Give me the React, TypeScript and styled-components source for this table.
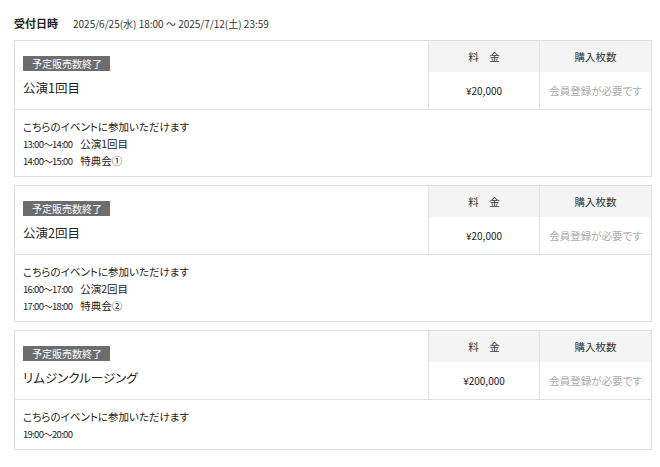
import styled, { createGlobalStyle } from 'styled-components';

type Slot = {
  time: string;
  label?: string;
};

type Ticket = {
  title: string;
  price: string;
  slots: Slot[];
};

const tickets: Ticket[] = [
  {
    title: '公演1回目',
    price: '¥20,000',
    slots: [
      { time: '13:00〜14:00', label: '公演1回目' },
      { time: '14:00〜15:00', label: '特典会①' },
    ],
  },
  {
    title: '公演2回目',
    price: '¥20,000',
    slots: [
      { time: '16:00〜17:00', label: '公演2回目' },
      { time: '17:00〜18:00', label: '特典会②' },
    ],
  },
  {
    title: 'リムジンクルージング',
    price: '¥200,000',
    slots: [{ time: '19:00〜20:00' }],
  },
];

export default function App() {
  return (
    <>
      <GlobalStyle />
      <Page>
        <Period>
          <PeriodLabel>受付日時</PeriodLabel>
          <PeriodValue>2025/6/25(水) 18:00 〜 2025/7/12(土) 23:59</PeriodValue>
        </Period>

        {tickets.map((t) => (
          <Card key={t.title}>
            <Top>
              <Info>
                <Badge>予定販売数終了</Badge>
                <Title>{t.title}</Title>
              </Info>
              <Column>
                <HeadCell>料　金</HeadCell>
                <Price>{t.price}</Price>
              </Column>
              <Column>
                <HeadCell>購入枚数</HeadCell>
                <Notice>会員登録が必要です</Notice>
              </Column>
            </Top>
            <Details>
              <Line>こちらのイベントに参加いただけます</Line>
              {t.slots.map((s) => (
                <Line key={s.time}>
                  <Time>{s.time}</Time>
                  {s.label && <SlotLabel>{s.label}</SlotLabel>}
                </Line>
              ))}
            </Details>
          </Card>
        ))}
      </Page>
    </>
  );
}

const GlobalStyle = createGlobalStyle`
  body {
    margin: 0;
    background: #ffffff;
    color: #222;
    font-family: "Noto Sans CJK JP", "Noto Sans", sans-serif;
    font-feature-settings: "palt";
  }
`;

const Page = styled.div`
  width: 638px;
  padding: 14px 0 0 14px;
  display: flex;
  flex-direction: column;
  gap: 8px;
`;

const Period = styled.div`
  display: flex;
  align-items: center;
  gap: 15px;
  height: 18px;
`;

const PeriodLabel = styled.span`
  font-weight: 700;
  font-size: 11px;
`;

const PeriodValue = styled.span`
  font-size: 10px;
  color: #333;
`;

const Card = styled.div`
  border: 1px solid #dedede;
  background: #fff;
`;

const Top = styled.div`
  display: grid;
  grid-template-columns: 1fr 111px 112px;
  height: 68px;
  overflow: hidden;
  border-bottom: 1px solid #e2e2e2;
`;

const Info = styled.div`
  padding: 15px 8px 0 8px;
  display: flex;
  flex-direction: column;
  align-items: flex-start;
`;

const Badge = styled.span`
  display: block;
  height: 15px;
  background: #6d6d6d;
  color: #fff;
  font-size: 10px;
  line-height: 15px;
  padding: 0 8px 0 9px;
`;

const Title = styled.div`
  height: 18px;
  font-size: 12.5px;
  line-height: 18px;
  margin-top: 8px;
`;

const Column = styled.div`
  display: flex;
  flex-direction: column;
  border-left: 1px solid #e2e2e2;
`;

const HeadCell = styled.div`
  background: #f4f4f4;
  height: 31px;
  display: flex;
  align-items: center;
  justify-content: center;
  font-size: 10.5px;
  color: #333;
`;

const Price = styled.div`
  flex: 1;
  display: flex;
  align-items: center;
  justify-content: center;
  font-size: 10px;
  color: #222;
`;

const Notice = styled.div`
  flex: 1;
  display: flex;
  align-items: center;
  justify-content: center;
  font-size: 10.5px;
  color: #ababab;
`;

const Details = styled.div`
  padding: 8px 8px 7px 8px;
`;

const Line = styled.div`
  height: 17px;
  font-size: 10.5px;
  line-height: 17px;
  white-space: nowrap;
  overflow: hidden;
`;

const Time = styled.span`
  font-size: 9.5px;
  letter-spacing: -0.7px;
`;

const SlotLabel = styled.span`
  margin-left: 8px;
`;
